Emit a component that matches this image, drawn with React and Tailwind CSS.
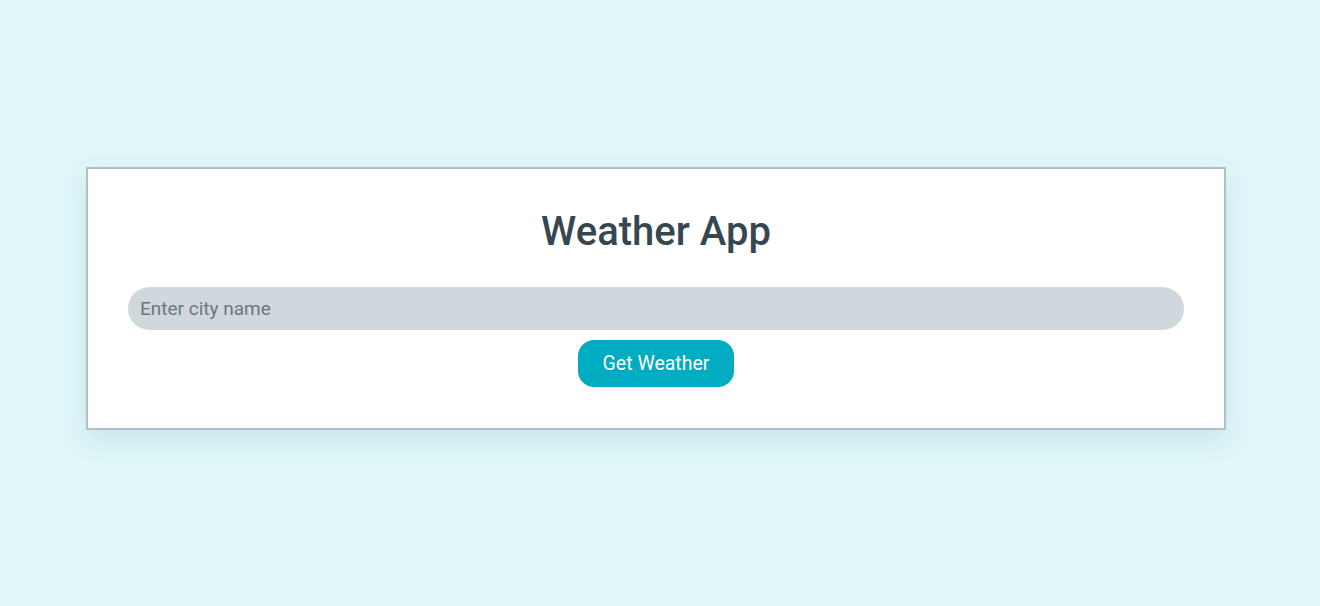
import React, { useState } from "react";

const App = () => {
  const [city, setCity] = useState("");

  return (
    <div className="min-h-[606px] w-full bg-[#e0f7fa] pt-[167px] font-['Roboto',sans-serif]">
      <div className="ml-[86px] flex w-[1140px] flex-col items-center border-2 border-[#b0bec5] bg-white px-10 pt-10 pb-[41px] shadow-[0_10px_25px_rgba(0,96,100,0.12)]">
        <h1 className="text-[40px] leading-[46px] font-medium text-[#37474f]">
          Weather App
        </h1>

        <input
          type="text"
          value={city}
          onChange={(e) => setCity(e.target.value)}
          placeholder="Enter city name"
          className="mt-[32px] h-[43px] w-full rounded-full bg-[#cfd8dc] px-3 text-[19px] text-[#37474f] outline-none placeholder:text-[#6b7780]"
        />

        <button
          type="button"
          className="mt-[10px] h-[47px] w-[156px] rounded-[16px] bg-[#00acc1] text-[19.5px] text-white"
        >
          Get Weather
        </button>
      </div>
    </div>
  );
};

export default App;
